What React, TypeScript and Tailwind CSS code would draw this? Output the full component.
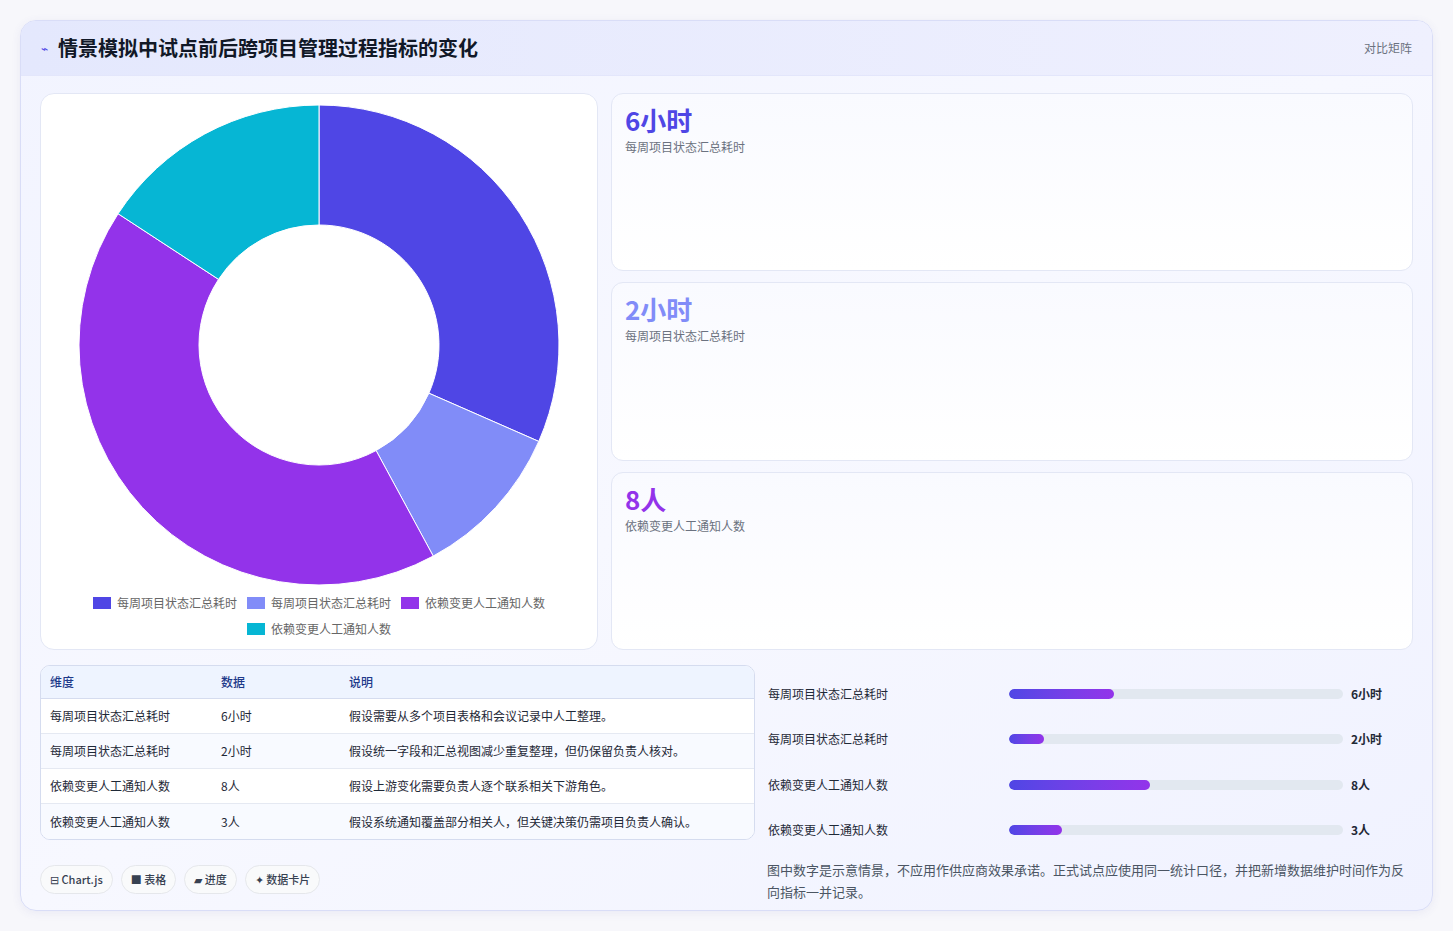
import React from "react";

const data = [
  { label: "每周项目状态汇总耗时", v: 6, unit: "6小时", color: "#4f46e5", note: "假设需要从多个项目表格和会议记录中人工整理。" },
  { label: "每周项目状态汇总耗时", v: 2, unit: "2小时", color: "#818cf8", note: "假设统一字段和汇总视图减少重复整理，但仍保留负责人核对。" },
  { label: "依赖变更人工通知人数", v: 8, unit: "8人", color: "#9333ea", note: "假设上游变化需要负责人逐个联系相关下游角色。" },
  { label: "依赖变更人工通知人数", v: 3, unit: "3人", color: "#06b6d4", note: "假设系统通知覆盖部分相关人，但关键决策仍需项目负责人确认。" },
];
const total = 19;

function Donut() {
  const cx = 240, cy = 240, R = 240, r = 120;
  let a = 0;
  const pt = (ang: number, rad: number) => [cx + rad * Math.sin(ang), cy - rad * Math.cos(ang)];
  return (
    <svg width="480" height="480" viewBox="0 0 480 480">
      {data.map((d, i) => {
        const a0 = a, a1 = a + (d.v / total) * Math.PI * 2;
        a = a1;
        const large = a1 - a0 > Math.PI ? 1 : 0;
        const [x0, y0] = pt(a0, R), [x1, y1] = pt(a1, R), [x2, y2] = pt(a1, r), [x3, y3] = pt(a0, r);
        return (
          <path key={i} fill={d.color} stroke="#fff" strokeWidth="1"
            d={`M${x0} ${y0} A${R} ${R} 0 ${large} 1 ${x1} ${y1} L${x2} ${y2} A${r} ${r} 0 ${large} 0 ${x3} ${y3} Z`} />
        );
      })}
    </svg>
  );
}

function Legend({ d }: { d: typeof data[0] }) {
  return (
    <div className="flex items-center gap-[6px]">
      <span className="w-[18px] h-[12px]" style={{ background: d.color }} />
      <span className="text-[12px] text-[#666]">{d.label}</span>
    </div>
  );
}

export default function App() {
  return (
    <div className="w-[1453px] h-[931px] bg-[#f7f7fb] pt-[20px] pl-[20px]" style={{ fontFamily: '"Noto Sans CJK SC", "Noto Sans", sans-serif' }}>
      <div className="w-[1413px] h-[891px] rounded-[16px] border border-[#d9ddf7] bg-gradient-to-br from-[#f2f4ff] via-[#f7f8ff] to-[#f0f2ff] overflow-hidden flex flex-col shadow-[0_2px_10px_rgba(80,80,160,0.08)]">
        <div className="h-[55px] shrink-0 flex items-center justify-between px-[20px] bg-gradient-to-r from-[#e4e8fd] to-[#eff0fe] border-b border-[#e3e6fb]">
          <div className="flex items-center gap-[10px]">
            <span className="text-[#4f46e5] text-[12px]">⌁</span>
            <span className="text-[20px] font-bold text-[#111827]">情景模拟中试点前后跨项目管理过程指标的变化</span>
          </div>
          <span className="text-[12px] text-[#6b7280]">对比矩阵</span>
        </div>
        <div className="flex-1 px-[19px] pt-[17px] flex flex-col">
          <div className="flex gap-[13px] h-[557px]">
            <div className="w-[558px] rounded-[14px] border border-[#e3e7f5] bg-white flex flex-col items-center pt-[11px]">
              <Donut />
              <div className="flex flex-wrap justify-center gap-x-[10px] gap-y-[8px] mt-[9px] w-[470px]">
                {data.map((d, i) => <Legend key={i} d={d} />)}
              </div>
            </div>
            <div className="flex-1 flex flex-col gap-[11px]">
              {[data[0], data[1], data[2]].map((d, i) => (
                <div key={i} className="flex-1 rounded-[12px] border border-[#e3e7f5] bg-gradient-to-b from-[#f9faff] to-white px-[13px] pt-[9px]">
                  <div className="text-[26px] font-bold leading-[34px]" style={{ color: d.color }}>{d.unit}</div>
                  <div className="text-[12px] text-[#6b7280] mt-[1px]">{d.label}</div>
                </div>
              ))}
            </div>
          </div>
          <div className="flex gap-[12px] mt-[15px]">
            <div className="w-[715px] flex flex-col">
              <div className="rounded-[10px] border border-[#d5dcef] overflow-hidden bg-white text-[12px] text-[#1f2937]">
                <div className="flex h-[33px] items-center bg-[#eef4ff] text-[#1e3a8a] font-medium border-b border-[#d5dcef]">
                  <div className="w-[180px] pl-[9px]">维度</div><div className="w-[128px]">数据</div><div>说明</div>
                </div>
                {data.map((d, i) => (
                  <div key={i} className={`flex h-[35px] items-center ${i < 3 ? "border-b border-[#e5e9f2]" : ""} ${i % 2 ? "bg-[#f8faff]" : "bg-white"}`}>
                    <div className="w-[180px] pl-[9px]">{d.label}</div><div className="w-[128px]">{d.unit}</div><div>{d.note}</div>
                  </div>
                ))}
              </div>
              <div className="flex gap-[8px] mt-[25px]">
                {["⊟ Chart.js", "■ 表格", "▰ 进度", "✦ 数据卡片"].map((c) => (
                  <span key={c} className="h-[29px] px-[9px] flex items-center rounded-full border border-[#e5e7eb] bg-[#f9fafb] text-[11px] font-medium text-[#374151]">{c}</span>
                ))}
              </div>
            </div>
            <div className="flex-1 flex flex-col pt-[6px]">
              {data.map((d, i) => (
                <div key={i} className="flex items-center h-[45.5px] text-[12px] text-[#1f2937]">
                  <div className="w-[242px] pl-[1px]">{d.label}</div>
                  <div className="w-[334px] h-[10px] rounded-full bg-[#e2e8f0] overflow-hidden">
                    <div className="h-full rounded-full bg-gradient-to-r from-[#4f46e5] to-[#9333ea]" style={{ width: `${(d.v / total) * 100}%` }} />
                  </div>
                  <div className="ml-[8px] font-bold">{d.unit}</div>
                </div>
              ))}
              <p className="text-[13px] leading-[22px] text-[#4b5563] mt-[6px] pr-[6px]">图中数字是示意情景，不应用作供应商效果承诺。正式试点应使用同一统计口径，并把新增数据维护时间作为反向指标一并记录。</p>
            </div>
          </div>
        </div>
      </div>
    </div>
  );
}
